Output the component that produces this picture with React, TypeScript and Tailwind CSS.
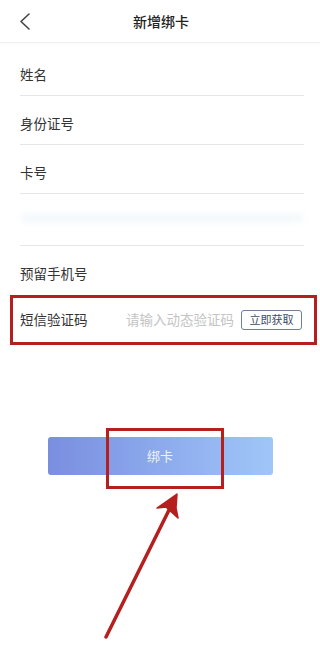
import React from "react";

const FONT = { fontFamily: '"Noto Sans CJK SC", "Noto Sans", sans-serif' };

function Row({ label, h = "h-[49px]" }: { label: string; h?: string }) {
  return (
    <div className={`${h} ml-[20px] mr-[16px] flex items-end pb-[14px] border-b border-[#e6e6e6]`}>
      <span className="text-[13.5px] leading-none text-[#333]">{label}</span>
    </div>
  );
}

export default function App() {
  return (
    <div className="relative w-[320px] h-[654px] bg-white overflow-hidden" style={FONT}>
      {/* header */}
      <div className="h-[43px] flex items-center justify-center relative border-b border-[#f0f0f0] shadow-[0_1px_2px_rgba(0,0,0,0.03)]">
        <svg className="absolute left-[19px] top-[13px]" width="12" height="17" viewBox="0 0 12 17">
          <polyline points="10,1 2,8.5 10,16" fill="none" stroke="#444" strokeWidth="1.6" strokeLinecap="round" strokeLinejoin="round" />
        </svg>
        <span className="text-[14px] font-medium text-[#222] ml-[2px]">新增绑卡</span>
      </div>

      <Row label="姓名" h="h-[53px]" />
      <Row label="身份证号" />
      <Row label="卡号" />
      <div className="h-[52px] ml-[20px] mr-[16px] border-b border-[#e6e6e6] flex items-center">
        <div className="w-full h-[10px] mt-[-4px] bg-[#f5f9fc] blur-[3px] rounded-full" />
      </div>
      <div className="h-[49px] ml-[20px] mr-[16px] flex items-end pb-[15px]">
        <span className="text-[13.5px] leading-none text-[#333]">预留手机号</span>
      </div>

      {/* sms row */}
      <div className="relative h-[49px] ml-[20px] mr-[16px] flex items-center justify-between">
        <span className="text-[13.5px] leading-none text-[#333]">短信验证码</span>
        <div className="flex items-center gap-[7px] mr-[2px]">
          <span className="text-[13.5px] leading-none text-[#c4c4c4]">请输入动态验证码</span>
          <span className="h-[20px] w-[61px] flex items-center justify-center border border-[#6f8098] rounded-[3px] text-[11px] leading-none text-[#3c4d66]">
            立即获取
          </span>
        </div>
        <div className="absolute left-[-10px] right-[-13px] top-0 bottom-[-1px] border-[3px] border-[#b5201f]" />
      </div>

      {/* submit button */}
      <div className="relative mt-[93px] mx-auto w-[225px] h-[38px] rounded-[3px] bg-gradient-to-r from-[#7a8ee0] to-[#9fc6f8] flex items-center justify-center">
        <span className="text-[13px] text-[#eef2fb]">绑卡</span>
        <div className="absolute left-[58px] top-[-9px] w-[118px] h-[61px] border-[3px] border-[#b5201f]" />
      </div>

      {/* arrow */}
      <svg className="absolute left-0 top-0" width="320" height="654" viewBox="0 0 320 654">
        <line x1="106" y1="637" x2="173" y2="502" stroke="#b5201f" strokeWidth="3.5" strokeLinecap="round" />
        <polygon points="177,494 157,508 166,507 178,518 176,508" fill="#b5201f" stroke="#b5201f" strokeWidth="1.5" strokeLinejoin="round" />
      </svg>
    </div>
  );
}
